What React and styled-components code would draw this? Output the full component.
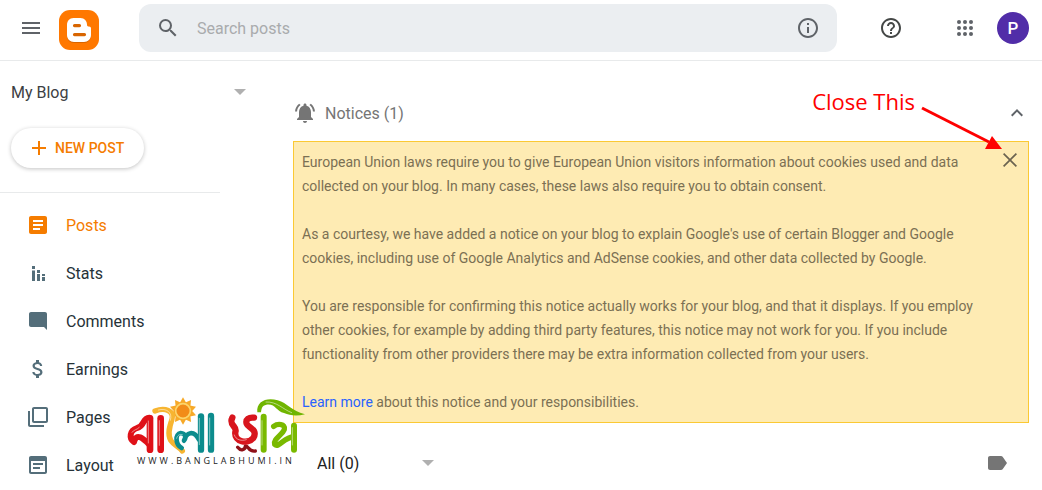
import React from "react";
import styled, { createGlobalStyle } from "styled-components";

const GlobalStyle = createGlobalStyle`
    * {
        box-sizing: border-box;
    }
    body {
        margin: 0;
        background: #fff;
        color: #263238;
        font-family: Roboto, "Liberation Sans", sans-serif;
        font-size: 16px;
    }
    button, input, select {
        font: inherit;
        color: inherit;
    }
`;

const Page = styled.div`
    position: relative;
    overflow: hidden;
`;

const Header = styled.header`
    display: flex;
    align-items: center;
    height: 61px;
    padding: 0 13px 4px 19px;
    border-bottom: 1px solid #e8eaeb;
`;

const IconButton = styled.button`
    display: flex;
    flex: none;
    padding: 0;
    border: 0;
    background: none;
    color: ${props => props.$color || "#5f6368"};
    cursor: pointer;
`;

const Logo = styled.a`
    display: flex;
    margin: 4px 40px 0 16px;
`;

const SearchBar = styled.form`
    flex: 1;
    min-width: 0;
    display: flex;
    align-items: center;
    height: 48px;
    padding: 0 17px;
    border-radius: 12px;
    background: #ebeef1;
    color: #5f6368;
`;

const SearchInput = styled.input`
    flex: 1;
    min-width: 0;
    margin: 0 17px;
    padding: 0;
    border: 0;
    outline: 0;
    background: none;

    &::placeholder {
        color: #a9abad;
        opacity: 1;
    }
`;

const HeaderTools = styled.div`
    display: flex;
    align-items: center;
    margin-left: 42px;
`;

const AppsSection = styled.div`
    display: flex;
    align-items: center;
    gap: 20px;
    margin-left: 50px;
`;

const Avatar = styled.button`
    width: 32px;
    height: 32px;
    padding: 0;
    border: 0;
    border-radius: 50%;
    background: #512da8;
    color: #fff;
    font-size: 17px;
    font-weight: 500;
`;

const Body = styled.div`
    display: flex;
`;

const Sidebar = styled.aside`
    flex: none;
    width: 260px;
    padding-top: 19px;
`;

const SelectFrame = styled.div`
    display: flex;
    align-items: center;
    width: ${props => props.$width};
    height: 24px;
    margin-left: ${props => props.$indent};
    color: ${props => props.$color};

    svg {
        flex: none;
        margin-left: -12px;
        pointer-events: none;
    }
`;

const Select = styled.select`
    flex: 1;
    min-width: 0;
    appearance: none;
    padding: 0;
    border: 0;
    outline: 0;
    background: none;
`;

const NewPost = styled.button`
    display: flex;
    align-items: center;
    gap: 4px;
    height: 40px;
    margin: 24px 0 24px 11px;
    padding: 0 20px 0 16px;
    border: 0;
    border-radius: 20px;
    background: #fff;
    box-shadow: 0 1px 4px rgba(0, 0, 0, 0.24);
    color: #f57c00;
    font-size: 14px;
    font-weight: 500;
    white-space: nowrap;
`;

const Nav = styled.nav`
    width: 220px;
    padding-top: 8px;
    border-top: 1px solid #e8eaeb;
`;

const NavItem = styled.a`
    display: flex;
    align-items: center;
    gap: 16px;
    height: 48px;
    padding-left: 26px;
    color: ${props => (props.$active ? "#f57c00" : "#263238")};
    text-decoration: none;

    svg {
        color: ${props => (props.$active ? "#f57c00" : "#546e7a")};
    }
`;

const Main = styled.main`
    flex: 1;
    min-width: 0;
    padding: 40px 13px 0 33px;
`;

const NoticeHeader = styled.div`
    display: flex;
    align-items: center;
    gap: 8px;
    height: 24px;
    color: #757575;
`;

const NoticeTitle = styled.h2`
    flex: 1;
    margin: 0;
    font-size: 16px;
    font-weight: 400;
`;

const NoticeBox = styled.section`
    display: flex;
    align-items: flex-start;
    gap: 16px;
    margin-top: 16px;
    padding: 6px 6px 8px 8px;
    border: 1px solid #fbc934;
    background: #feebb3;
    color: #7b7053;
`;

const NoticeText = styled.div`
    flex: 1;
    padding-top: 2px;
    font-size: 14px;
    line-height: 24px;

    p {
        margin: 0 0 24px;
    }
    p:last-child {
        margin: 0;
    }
    a {
        color: #2962ff;
        text-decoration: none;
    }
`;

const ListBar = styled.div`
    display: flex;
    align-items: center;
    justify-content: space-between;
    padding: 28px 20px 14px 0;
`;

const Callout = styled.div`
    position: absolute;
    top: 84px;
    right: 39px;
    display: flex;
    gap: 6px;
    color: #fe0000;
    font-family: "Open Sans", "Noto Sans", sans-serif;
    font-size: 22px;
    line-height: 34px;
    pointer-events: none;

    svg {
        margin-top: 20px;
    }
`;

const Watermark = styled.div`
    position: absolute;
    top: 385px;
    left: 115px;
    width: 200px;
    pointer-events: none;

    svg {
        display: block;
    }
`;

const WatermarkUrl = styled.div`
    margin-top: -20px;
    padding-left: 22px;
    color: #222;
    font-family: "Open Sans", "Noto Sans", sans-serif;
    font-size: 9px;
    line-height: 12px;
    letter-spacing: 3px;
    white-space: nowrap;
`;

const Icon = ({ d, size = 24, children }) => (
    <svg width={size} height={size} viewBox="0 0 24 24" fill="currentColor" aria-hidden="true">
        {d && <path d={d} />}
        {children}
    </svg>
);

const Caret = () => (
    <svg width="12" height="6" viewBox="0 0 12 6" fill="#b0b0b0" aria-hidden="true">
        <path d="M0 0h12L6 6z" />
    </svg>
);

const icons = {
    menu: "M3 18h18v-2H3v2zm0-5h18v-2H3v2zm0-7v2h18V6H3z",
    search: "M15.5 14h-.79l-.28-.27A6.471 6.471 0 0 0 16 9.5 6.5 6.5 0 1 0 9.5 16c1.61 0 3.09-.59 4.23-1.57l.27.28v.79l5 4.99L20.49 19l-4.99-5zm-6 0C7.01 14 5 11.99 5 9.5S7.01 5 9.5 5 14 7.01 14 9.5 11.99 14 9.5 14z",
    info: "M11 17h2v-6h-2v6zm1-15C6.48 2 2 6.48 2 12s4.48 10 10 10 10-4.48 10-10S17.52 2 12 2zm0 18c-4.41 0-8-3.59-8-8s3.59-8 8-8 8 3.59 8 8-3.59 8-8 8zM11 9h2V7h-2v2z",
    help: "M11 18h2v-2h-2v2zm1-16C6.48 2 2 6.48 2 12s4.48 10 10 10 10-4.48 10-10S17.52 2 12 2zm0 18c-4.41 0-8-3.59-8-8s3.59-8 8-8 8 3.59 8 8-3.59 8-8 8zm0-14c-2.21 0-4 1.79-4 4h2c0-1.1.9-2 2-2s2 .9 2 2c0 2-3 1.75-3 5h2c0-2.25 3-2.5 3-5 0-2.21-1.79-4-4-4z",
    posts: "M19 3H5c-1.1 0-2 .9-2 2v14c0 1.1.9 2 2 2h14c1.1 0 2-.9 2-2V5c0-1.1-.9-2-2-2zm-5 14H7v-2h7v2zm3-4H7v-2h10v2zm0-4H7V7h10v2z",
    stats: "M6 5h3v3H6zM6 9.500h3V20H6zM11 9h3v3h-3zM11 13h3v7h-3zM16 13h3v2h-3zM16 16h3v4h-3z",
    comments: "M5 3h14c1.100 0 2 .9 2 2v16l-3-3H5c-1.100 0-2-.9-2-2V5c0-1.100.9-2 2-2z",
    earnings: "M11.800 10.900c-2.270-.59-3-1.200-3-2.150 0-1.090 1.010-1.850 2.700-1.850 1.780 0 2.440.85 2.500 2.100h2.210c-.07-1.720-1.120-3.300-3.210-3.810V3h-3v2.160c-1.940.42-3.500 1.680-3.500 3.610 0 2.310 1.910 3.460 4.700 4.130 2.500.6 3 1.480 3 2.410 0 .69-.49 1.790-2.700 1.790-2.060 0-2.870-.92-2.980-2.100h-2.200c.12 2.190 1.760 3.420 3.680 3.830V21h3v-2.150c1.950-.37 3.500-1.500 3.500-3.550 0-2.840-2.430-3.810-4.700-4.400z",
    pages: "M4 6H2v14c0 1.100.9 2 2 2h14v-2H4V6zm16-4H8c-1.100 0-2 .9-2 2v12c0 1.100.9 2 2 2h12c1.100 0 2-.9 2-2V4c0-1.100-.9-2-2-2zm0 14H8V4h12v12z",
    layout: "M19 3H5c-1.110 0-2 .9-2 2v14c0 1.100.89 2 2 2h14c1.100 0 2-.9 2-2V5c0-1.100-.89-2-2-2zm0 16H5V8h14v11zM17 10H7v2h10v-2zM14 14H7v2h7v-2z",
    bell: "M7.580 4.080L6.150 2.650C3.750 4.480 2.170 7.300 2.030 10.500h2c.15-2.650 1.510-4.970 3.550-6.420zm12.390 6.420h2c-.15-3.200-1.730-6.020-4.120-7.850l-1.420 1.430c2.020 1.450 3.390 3.770 3.540 6.420zM18 11c0-3.070-1.640-5.640-4.500-6.320V4c0-.83-.67-1.500-1.500-1.500s-1.500.67-1.500 1.500v.68C7.630 5.360 6 7.920 6 11v5l-2 2v1h16v-1l-2-2v-5zm-6 11c1.100 0 2-.9 2-2h-4c0 1.100.9 2 2 2z",
    collapse: "M12 8l-6 6 1.410 1.410L12 10.830l4.590 4.580L18 14z",
    close: "M19 6.200L17.800 5 12 10.800 6.200 5 5 6.200 10.800 12 5 17.800 6.200 19 12 13.200 17.800 19 19 17.800 13.200 12z",
    label: "M17.630 5.840C17.270 5.330 16.670 5 16 5L5 5.010C3.900 5.010 3 5.900 3 7v10c0 1.100.9 1.990 2 1.990L16 19c.67 0 1.270-.33 1.630-.84L22 12l-4.370-6.160z",
};

const navItems = [
    { name: "Posts", icon: icons.posts, active: true },
    { name: "Stats", icon: icons.stats },
    { name: "Comments", icon: icons.comments },
    { name: "Earnings", icon: icons.earnings },
    { name: "Pages", icon: icons.pages },
    { name: "Layout", icon: icons.layout },
];

const BloggerLogo = () => (
    <svg width="40" height="40" viewBox="0 0 40 40" aria-hidden="true">
        <rect width="40" height="40" rx="11" fill="#ff7800" />
        <path
            fill="#d86500"
            d="M14.500 9h7c4 0 6.500 3 6.500 6.500 0 1.500.5 2 2 2 1.300 0 2 .7 2 2V26c0 4-3 7-7 7H15c-4 0-7-3-7-7V16c0-4 2.500-7 6.500-7z"
        />
        <path
            fill="#fff"
            fillRule="evenodd"
            d="M14.500 8h7c4 0 6.500 3 6.500 6.500 0 1.500.5 2 2 2 1.300 0 2 .7 2 2V25c0 4-3 7-7 7H15c-4 0-7-3-7-7V15c0-4 2.500-7 6.500-7zM15.500 14a1.600 1.600 0 0 0 0 3.200h5a1.600 1.600 0 0 0 0-3.200zM15.500 23a1.600 1.600 0 0 0 0 3.200h10a1.600 1.600 0 0 0 0-3.200z"
        />
    </svg>
);

const sunRays = [0, 36, 72, 108, 144, 180, 216, 252, 288, 324];

const BanglaBhumiLogo = () => (
    <svg width="200" height="90" viewBox="0 0 600 270" fill="none" strokeLinecap="round" strokeLinejoin="round" role="img" aria-label="বাংলা ভূমি">
        {sunRays.map(angle => (
            <path key={angle} d="M193 56L204 37l11 19z" fill="#f7a928" transform={`rotate(${angle} 204 78)`} />
        ))}
        <circle cx="204" cy="78" r="22" fill="#f28c18" stroke="#fcd56a" strokeWidth="5" />
        <g stroke="#df1118" strokeWidth="18">
            <path d="M103 98C80 99 91 124 66 129C44 136 41 160 57 171C64 142 84 160 103 179" />
            <path d="M105 100V194" strokeWidth="20" />
            <path d="M137 100V194" strokeWidth="20" />
        </g>
        <path d="M120 78C150 67 178 77 171 103C163 126 157 147 167 166C176 180 192 185 202 198" stroke="#f7b531" strokeWidth="16" />
        <g stroke="#0c8c8d" strokeWidth="14">
            <path d="M200 189C180 178 180 146 197 144C211 145 215 157 207 167C214 142 236 134 252 164" />
            <path d="M258 94V194" strokeWidth="19" />
            <path d="M288 93V194" strokeWidth="19" />
        </g>
        <path d="M368 187C378 200 391 194 391 183C402 182 399 201 421 198" stroke="#8f1118" strokeWidth="10" />
        <g stroke="#d8151d" strokeWidth="19">
            <path d="M352 98C340 121 368 124 361 141C357 171 398 179 415 159C430 133 399 128 395 116C391 103 402 96 417 98" />
        </g>
        <g stroke="#79b900" strokeWidth="16">
            <path d="M446 95V194" strokeWidth="18" />
            <path d="M476 124C488 115 512 116 508 133C502 150 474 162 479 178C492 191 508 154 537 156" />
            <path d="M537 122V194" strokeWidth="18" />
        </g>
        <path d="M427 82C423 49 455 36 488 46C517 54 529 78 570 88C545 94 525 92 507 84C483 79 482 55 454 59C441 61 439 72 438 82Z" fill="#70b500" />
        <g stroke="#fff" strokeOpacity="0.5" strokeWidth="3">
            <path d="M100 108V174M133 107V181M253 100V179M284 99V180M441 107V180M532 128V180" />
            <path d="M130 75C154 68 174 82 166 106M51 142C55 134 66 135 73 127M185 160C187 151 194 146 202 149M358 150C362 165 380 169 394 164" />
            <path d="M453 51C486 49 503 73 530 83" />
        </g>
    </svg>
);

function TopBar() {
    return (
        <Header>
            <IconButton type="button" aria-label="Main menu">
                <Icon d={icons.menu} />
            </IconButton>
            <Logo href="#" aria-label="Blogger">
                <BloggerLogo />
            </Logo>
            <SearchBar role="search">
                <Icon d={icons.search} />
                <SearchInput type="text" placeholder="Search posts" aria-label="Search posts" />
                <IconButton type="button" aria-label="Search info">
                    <Icon d={icons.info} />
                </IconButton>
            </SearchBar>
            <HeaderTools>
                <IconButton type="button" aria-label="Help" $color="#444746">
                    <Icon d={icons.help} />
                </IconButton>
                <AppsSection>
                    <IconButton type="button" aria-label="Apps">
                        <Icon>
                            {[6, 12, 18].map(y => [6, 12, 18].map(x => (
                                <circle key={`${x}-${y}`} cx={x} cy={y} r="2" />
                            )))}
                        </Icon>
                    </IconButton>
                    <Avatar type="button" aria-label="Account">P</Avatar>
                </AppsSection>
            </HeaderTools>
        </Header>
    );
}

function SideMenu() {
    return (
        <Sidebar>
            <SelectFrame $width="235px" $indent="11px" $color="#3c4043">
                <Select aria-label="Blog">
                    <option>My Blog</option>
                </Select>
                <Caret />
            </SelectFrame>
            <NewPost type="button">
                <Icon d="M19 13h-6v6h-2v-6H5v-2h6V5h2v6h6v2z" />
                NEW POST
            </NewPost>
            <Nav>
                {navItems.map(item => (
                    <NavItem key={item.name} href="#" $active={item.active}>
                        <Icon d={item.icon} />
                        {item.name}
                    </NavItem>
                ))}
            </Nav>
        </Sidebar>
    );
}

function Notices() {
    return (
        <>
            <NoticeHeader>
                <Icon d={icons.bell} />
                <NoticeTitle>Notices (1)</NoticeTitle>
                <IconButton type="button" aria-label="Collapse notices">
                    <Icon d={icons.collapse} />
                </IconButton>
            </NoticeHeader>
            <NoticeBox>
                <NoticeText>
                    <p>
                        European Union laws require you to give European Union visitors information about cookies used and data
                        collected on your blog. In many cases, these laws also require you to obtain consent.
                    </p>
                    <p>
                        As a courtesy, we have added a notice on your blog to explain Google's use of certain Blogger and Google
                        cookies, including use of Google Analytics and AdSense cookies, and other data collected by Google.
                    </p>
                    <p>
                        You are responsible for confirming this notice actually works for your blog, and that it displays. If you employ
                        other cookies, for example by adding third party features, this notice may not work for you. If you include
                        functionality from other providers there may be extra information collected from your users.
                    </p>
                    <p>
                        <a href="#">Learn more</a> about this notice and your responsibilities.
                    </p>
                </NoticeText>
                <IconButton type="button" aria-label="Close notice" $color="#6b6350">
                    <Icon d={icons.close} />
                </IconButton>
            </NoticeBox>
        </>
    );
}

export default function App() {
    return (
        <Page>
            <GlobalStyle />
            <TopBar />
            <Body>
                <SideMenu />
                <Main>
                    <Notices />
                    <ListBar>
                        <SelectFrame $width="117px" $indent="24px" $color="#212121">
                            <Select aria-label="Filter posts">
                                <option>All (0)</option>
                            </Select>
                            <Caret />
                        </SelectFrame>
                        <IconButton type="button" aria-label="Labels" $color="#757575">
                            <Icon d={icons.label} />
                        </IconButton>
                    </ListBar>
                </Main>
            </Body>
            <Callout>
                Close This
                <svg width="82" height="48" viewBox="0 0 82 48" aria-hidden="true">
                    <path d="M1 4L68 38" stroke="#fe0000" strokeWidth="3" />
                    <path d="M81 45L64 45L71 32z" fill="#fe0000" />
                </svg>
            </Callout>
            <Watermark>
                <BanglaBhumiLogo />
                <WatermarkUrl>WWW.BANGLABHUMI.IN</WatermarkUrl>
            </Watermark>
        </Page>
    );
}
